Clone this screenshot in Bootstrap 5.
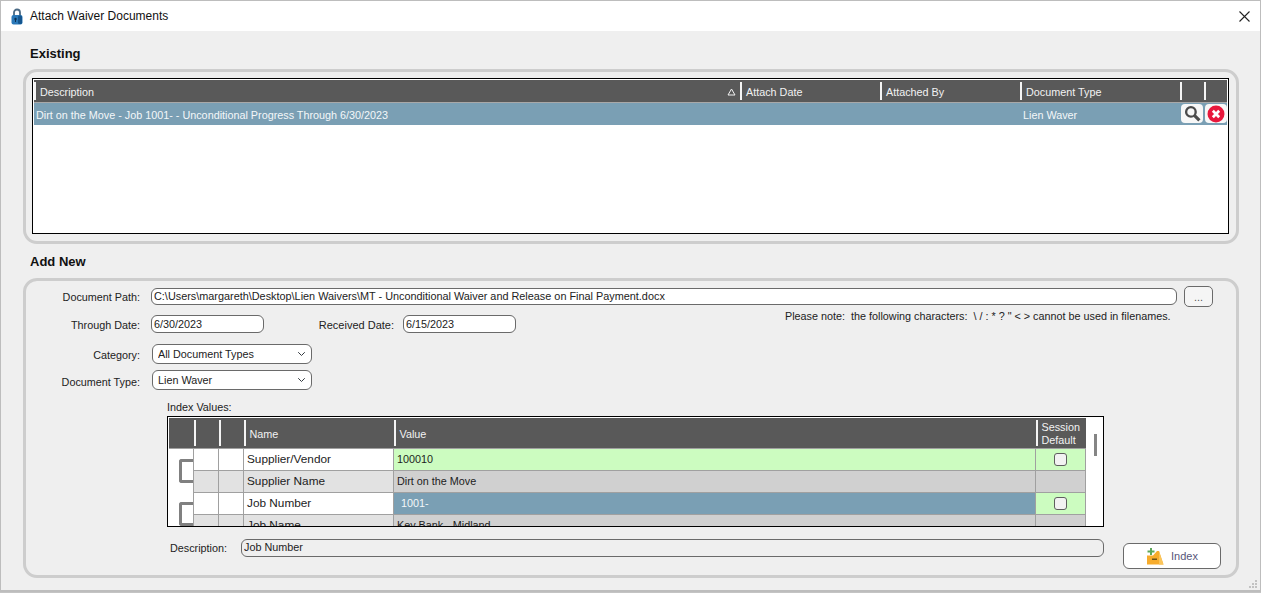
<!DOCTYPE html>
<html lang="en">
<head>
    <meta charset="UTF-8">
    <meta name="viewport" content="width=device-width, initial-scale=1.0">
    <title>Attach Waiver Documents</title>
    <link rel="stylesheet" href="https://cdn.jsdelivr.net/npm/bootstrap@5.3.0/dist/css/bootstrap.min.css">
    <script defer src="https://cdn.jsdelivr.net/npm/bootstrap@5.3.0/dist/js/bootstrap.bundle.min.js"></script>

    <style>
        html, body {
            margin: 0;
            height: 593px;
            overflow: hidden;
            background: #c4c4c4;
        }

        body, .form-control, .form-select, .btn {
            font-family: "Liberation Sans", Arial, sans-serif;
            font-size: 10.8px;
            color: #222;
        }

        /* Window frame */
        .dlg {
            position: relative;
            width: 1261px;
            height: 592px;
            background: #efefef;
            border: 1px solid #bdbdbd;
            border-bottom-width: 2px;
        }

        .dlg-title {
            height: 30px;
            background: #fff;
            padding: 0 10px;
            font-size: 12px;
            color: #111;
        }

        .lock-ico { margin-right: 7px; }

        .dlg-grip {
            position: absolute;
            right: 2px;
            bottom: 1px;
        }

        .sect-head {
            margin-left: 29px;
            font-size: 13px;
            font-weight: 700;
            line-height: 16px;
            color: #111;
        }

        .head-top { margin-top: 15px; }
        .head-add { margin-top: 10px; }

        .panel-box {
            margin-left: 22px;
            width: 1216px;
            border: 3px solid #cdcdcd;
            border-radius: 14px;
        }

        .panel-top { height: 175px; padding: 6px; margin-top: 7px; }
        .panel-add { height: 300px; margin-top: 8px; }

        /* Data grids */
        .wgrid {
            background: #fff;
            border: 1px solid #000;
            padding: 1px;
            overflow: hidden;
        }

        .wgrid-top { height: 156px; margin-right: 1px; }
        .wgrid-idx { margin-left: 141px; width: 937px; height: 111px; margin-top: 2px; }

        .wgrid table {
            table-layout: fixed;
            border-collapse: collapse;
        }

        .wgrid th {
            background: #595959;
            padding: 2px 0;
            font-weight: 400;
            color: #f2f2f2;
        }

        .hd-cell {
            border-left: 2px solid #f4f4f4;
            padding: 1px 0 0 4px;
            height: 18px;
            line-height: 18px;
        }

        .row-sel td {
            background: #7a9fb4;
            color: #f4f7f9;
            height: 22px;
            padding: 2px 0 0 2px;
            border-top: 1px solid #a8a8a8;
        }

        .row-sel td.c-typ { padding-left: 3px; }

        .tool-btn {
            width: 22px;
            height: 19px;
            margin-left: 1px;
            background: #f7f7f7;
            border-radius: 4px;
        }

        .wgrid-idx th { padding: 0; height: 30px; border-bottom: 1px solid #a0a0a0; }
        .wgrid-idx .hd-cell { height: 26px; line-height: 26px; }
        .wgrid-idx .hd-two { line-height: 13px; }

        .wgrid-idx td {
            height: 22px;
            padding: 0 0 0 3px;
            border: 1px solid #a0a0a0;
            border-top: 0;
            background: #fff;
            color: #1c1c1c;
            overflow: hidden;
            white-space: nowrap;
        }

        .wgrid-idx td.c-nm { font-size: 11.8px; padding-top: 2px; }
        .wgrid-idx td.c-lt { background: #e2e2e2; }
        .wgrid-idx td.c-dk { background: #d0d0d0; }
        .wgrid-idx td.c-gn { background: #ccfcc0; }
        .wgrid-idx td.c-sl { background: #7a9fb4; color: #f4f7f9; padding-left: 7px; }
        .wgrid-idx td.c-br { border-left: 0; border-bottom: 0; padding: 0; vertical-align: top; }
        .wgrid-idx td.c-ck { padding: 0; }

        .bracket {
            width: 14px;
            height: 24px;
            margin: 10px 0 0 10px;
            border: 3px solid #808080;
            border-right: 0;
            border-radius: 3px 0 0 3px;
        }

        .idx-scroll { flex: 1; }

        .idx-thumb {
            width: 3px;
            height: 22px;
            margin: 16px 0 0 8px;
            background: #858585;
        }

        .wgrid-idx .form-check-input {
            width: 13px;
            height: 13px;
            background-color: #f2f2f2;
            border: 1px solid #5e5e5e;
            border-radius: 3px;
            display: block;
            margin: 0 auto;
        }

        /* Form fields */
        .lbl { width: 114px; text-align: right; flex: none; padding-top: 2px; }
        .row-typ .lbl { padding-top: 4px; }

        .panel-add .form-control, .panel-add .form-select {
            padding: 0 0 2px 2px;
            min-height: 0;
            border: 1px solid #6a6a6a;
            border-radius: 6px;
            background-color: #fff;
            flex: none;
            line-height: 14px;
        }

        .panel-add .form-select {
            padding: 0 0 0 5px;
            width: 160px;
            height: 20px;
            margin-left: 12px;
            background-position: right 5px center;
            background-size: 9px 8px;
        }

        .panel-add .fld-date { padding-bottom: 0; }

        .fld-path { width: 1026px; height: 17px; margin-left: 11px; margin-right: 7px; font-size: 10.86px; }
        .fld-date { width: 113px; height: 18px; margin-left: 11px; }
        .fld-recv { margin-left: 9px; }
        .fld-desc { width: 863px; height: 18px; margin-left: 15px; background-color: #efefef !important; }

        .browse-btn {
            width: 29px;
            height: 21px;
            padding: 0;
            background: #f5f5f5;
            border: 1px solid #6a6a6a;
            border-radius: 5px;
            line-height: 18px;
            color: #555;
        }

        .row-path { margin-top: 5px; }
        .row-date { margin-top: 8px; height: 18px; }
        .lbl-recv { width: 130px; text-align: right; flex: none; padding-top: 2px; font-size: 11px; }
        .note-txt { margin: -15px 0 0 269px; white-space: nowrap; }
        .row-cat { margin-top: 11px; }
        .row-typ { margin-top: 6px; height: 20px; }
        .lbl-idx { margin: 10px 0 0 141px; line-height: 14px; }
        .row-desc { margin: 12px 0 0 144px; }
        .lbl-desc { width: 56px; flex: none; line-height: 18px; }

        .index-btn {
            width: 98px;
            height: 26px;
            margin: 4px 0 0 19px;
            padding: 0;
            background: #fff;
            border: 1px solid #6a6a6a;
            border-radius: 6px;
            color: #56567a;
            font-size: 11px;
        }

        .index-ico { margin: 0 7px 0 1px; }
    </style>
</head>

<body>
    <div class="dlg">
        <div class="dlg-title d-flex align-items-center">
            <svg width="12" height="17" viewBox="0 0 12 17" class="lock-ico">
                <path d="M3 8V4.500a3 3 0 0 1 6 0V8" fill="none" stroke="#4a6a85" stroke-width="1.800"/>
                <rect x="0.500" y="7" width="11" height="9.500" rx="2" fill="#2a78b8"/>
                <rect x="7" y="7.500" width="4" height="8.500" rx="1.500" fill="#14558e"/>
                <circle cx="4.500" cy="11" r="1.200" fill="#0c2f52"/>
                <rect x="4" y="11" width="1" height="3" fill="#0c2f52"/>
            </svg>
            <span>Attach Waiver Documents</span>
            <svg width="11" height="11" viewBox="0 0 11 11" class="ms-auto">
                <path d="M0.500 0.500L10.500 10.500M10.500 0.500L0.500 10.500" stroke="#222" stroke-width="1.100"/>
            </svg>
        </div>

        <div class="sect-head head-top">Existing</div>
        <div class="panel-box panel-top">
            <div class="wgrid wgrid-top">
                <table>
                    <colgroup>
                        <col width="706"><col width="140"><col width="140"><col width="160"><col width="24"><col width="23">
                    </colgroup>
                    <tr>
                        <th>
                            <div class="hd-cell d-flex justify-content-between align-items-center">
                                <span>Description</span>
                                <svg width="9" height="8" viewBox="0 0 9 8" class="me-1">
                                    <path d="M4.500 1L8 7H1Z" fill="none" stroke="#f2f2f2" stroke-width="1"/>
                                </svg>
                            </div>
                        </th>
                        <th><div class="hd-cell">Attach Date</div></th>
                        <th><div class="hd-cell">Attached By</div></th>
                        <th><div class="hd-cell">Document Type</div></th>
                        <th><div class="hd-cell"></div></th>
                        <th><div class="hd-cell"></div></th>
                    </tr>
                    <tr class="row-sel">
                        <td>Dirt on the Move - Job 1001- - Unconditional Progress Through 6/30/2023</td>
                        <td></td>
                        <td></td>
                        <td class="c-typ">Lien Waver</td>
                        <td class="p-0">
                            <div class="tool-btn d-flex align-items-center justify-content-center">
                                <svg width="17" height="17" viewBox="0 0 16 16">
                                    <circle cx="6.500" cy="6.500" r="4.500" fill="none" stroke="#4a4a4a" stroke-width="2.200"/>
                                    <path d="M10 10L14.500 14.500" stroke="#4a4a4a" stroke-width="3"/>
                                </svg>
                            </div>
                        </td>
                        <td class="p-0">
                            <div class="tool-btn d-flex align-items-center justify-content-center">
                                <svg width="18" height="18" viewBox="0 0 17 17">
                                    <circle cx="8.500" cy="8.500" r="8" fill="#e8173c"/>
                                    <path d="M5.500 5.500L11.500 11.500M11.500 5.500L5.500 11.500" stroke="#fff" stroke-width="2.600"/>
                                </svg>
                            </div>
                        </td>
                    </tr>
                </table>
            </div>
        </div>

        <div class="sect-head head-add">Add New</div>
        <div class="panel-box panel-add">
            <div class="row-path d-flex align-items-center">
                <div class="lbl">Document Path:</div>
                <input class="form-control fld-path" type="text" value="C:\Users\margareth\Desktop\Lien Waivers\MT - Unconditional Waiver and Release on Final Payment.docx">
                <button type="button" class="btn browse-btn">...</button>
            </div>
            <div class="row-date d-flex align-items-center">
                <div class="lbl">Through Date:</div>
                <input class="form-control fld-date" type="text" value="6/30/2023">
                <div class="lbl-recv">Received Date:</div>
                <input class="form-control fld-date fld-recv" type="text" value="6/15/2023">
                <div class="note-txt">Please note:&nbsp; the following characters:&nbsp; \ / : * ? " &lt; &gt; cannot be used in filenames.</div>
            </div>
            <div class="row-cat d-flex align-items-center">
                <div class="lbl">Category:</div>
                <select class="form-select"><option>All Document Types</option></select>
            </div>
            <div class="row-typ d-flex align-items-center">
                <div class="lbl">Document Type:</div>
                <select class="form-select"><option>Lien Waver</option></select>
            </div>

            <div class="lbl-idx">Index Values:</div>
            <div class="wgrid wgrid-idx d-flex">
                <table>
                    <colgroup>
                        <col width="24"><col width="25"><col width="25"><col width="150"><col width="642"><col width="50">
                    </colgroup>
                    <tr>
                        <th></th>
                        <th><div class="hd-cell"></div></th>
                        <th><div class="hd-cell"></div></th>
                        <th><div class="hd-cell">Name</div></th>
                        <th><div class="hd-cell">Value</div></th>
                        <th><div class="hd-cell hd-two">Session Default</div></th>
                    </tr>
                    <tr>
                        <td class="c-br" rowspan="2"><div class="bracket"></div></td>
                        <td></td><td></td>
                        <td class="c-nm">Supplier/Vendor</td>
                        <td class="c-gn">100010</td>
                        <td class="c-gn c-ck"><input class="form-check-input" type="checkbox"></td>
                    </tr>
                    <tr>
                        <td class="c-lt"></td><td class="c-lt"></td>
                        <td class="c-lt c-nm">Supplier Name</td>
                        <td class="c-dk">Dirt on the Move</td>
                        <td class="c-dk"></td>
                    </tr>
                    <tr>
                        <td class="c-br" rowspan="2"><div class="bracket"></div></td>
                        <td></td><td></td>
                        <td class="c-nm">Job Number</td>
                        <td class="c-sl">1001-</td>
                        <td class="c-gn c-ck"><input class="form-check-input" type="checkbox"></td>
                    </tr>
                    <tr>
                        <td class="c-lt"></td><td class="c-lt"></td>
                        <td class="c-lt c-nm">Job Name</td>
                        <td class="c-dk">Key Bank - Midland</td>
                        <td class="c-dk"></td>
                    </tr>
                </table>
                <div class="idx-scroll"><div class="idx-thumb"></div></div>
            </div>

            <div class="row-desc d-flex align-items-start">
                <div class="lbl-desc">Description:</div>
                <input class="form-control fld-desc" type="text" value="Job Number">
                <button type="button" class="btn index-btn d-flex align-items-center justify-content-center">
                    <svg width="17" height="17" viewBox="0 0 17 17" class="index-ico">
                        <path d="M0 7.500H6L10 3H12L16.500 16.500H0Z" fill="#f7ac2c"/>
                        <path d="M12 3L16.500 16.500H12Z" fill="#fbc55a"/>
                        <path d="M3 0H5V2.500H7.500V4.500H5V7H3V4.500H0.500V2.500H3Z" fill="#5da85a"/>
                        <rect x="5" y="10.500" width="5" height="1.500" fill="#6b5016"/>
                    </svg>
                    <span>Index</span>
                </button>
            </div>
        </div>

        <svg class="dlg-grip" width="10" height="10" viewBox="0 0 10 10">
            <path d="M7 1h2v2H7zM4 4h2v2H4zM7 4h2v2H7zM1 7h2v2H1zM4 7h2v2H4zM7 7h2v2H7z" fill="#c2c2c2"/>
        </svg>
    </div>
</body>
</html>
